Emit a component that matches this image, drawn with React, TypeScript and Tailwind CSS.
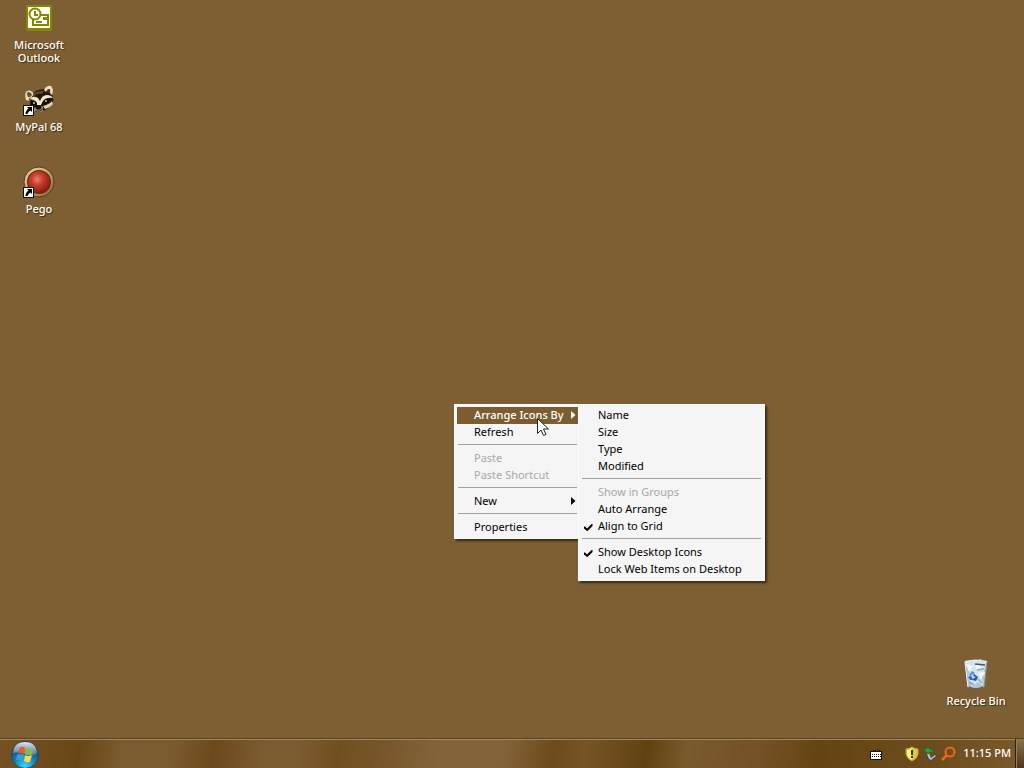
import type { ReactNode } from 'react';

type Entry = { label: string; disabled?: boolean; checked?: boolean; active?: boolean; submenu?: boolean } | null;

const mainMenu: Entry[] = [
  { label: 'Arrange Icons By', active: true, submenu: true },
  { label: 'Refresh' },
  null,
  { label: 'Paste', disabled: true },
  { label: 'Paste Shortcut', disabled: true },
  null,
  { label: 'New', submenu: true },
  null,
  { label: 'Properties' },
];

const arrangeMenu: Entry[] = [
  { label: 'Name' },
  { label: 'Size' },
  { label: 'Type' },
  { label: 'Modified' },
  null,
  { label: 'Show in Groups', disabled: true },
  { label: 'Auto Arrange' },
  { label: 'Align to Grid', checked: true },
  null,
  { label: 'Show Desktop Icons', checked: true },
  { label: 'Lock Web Items on Desktop' },
];

function Menu({ label, entries, className }: { label: string; entries: Entry[]; className: string }) {
  return (
    <div
      role="menu"
      aria-label={label}
      className={`absolute border border-white bg-[#f5f5f5] p-0.5 shadow-[2px_2px_2px_0_rgba(30,18,0,0.7)] ${className}`}
    >
      {entries.map((e, i) =>
        e === null ? (
          <div key={i} role="separator" className="h-[9px] px-px pt-[3px]">
            <div className="h-px bg-[#a0a0a0]" />
          </div>
        ) : (
          <button
            key={i}
            role={e.checked ? 'menuitemcheckbox' : 'menuitem'}
            aria-checked={e.checked ? true : undefined}
            disabled={e.disabled}
            className={`flex h-[17px] w-full items-center pb-0.5 text-left leading-[15px] whitespace-nowrap ${
              e.active ? 'bg-[#7b5d31] font-medium text-white' : e.disabled ? 'text-[#aaa8a5]' : 'text-black'
            }`}
          >
            <span className="flex w-[17px] shrink-0 items-center pt-[3px] pl-[3px]">
              {e.checked && (
                <svg width="9" height="8" viewBox="0 0 9 8" aria-hidden="true">
                  <path d="M0 3.500H1L3 5.500L7.500 1H8.500V3L3.500 8H3L0 5.500Z" fill="#000" />
                </svg>
              )}
            </span>
            <span className="flex-1">{e.label}</span>
            {e.submenu && (
              <svg width="8" height="8" viewBox="0 0 8 8" aria-hidden="true">
                <path d="M1 0 L5.500 4 L1 8 Z" fill="currentColor" />
              </svg>
            )}
          </button>
        ),
      )}
    </div>
  );
}

function DesktopIcon({ label, shortcut, children }: { label: string; shortcut?: boolean; children: ReactNode }) {
  return (
    <button className="flex h-[82px] w-[78px] flex-col items-center gap-1 text-center font-medium text-white [text-shadow:1px_1px_1px_rgba(50,32,5,0.8)]">
      <span className="relative block size-8">
        {children}
        {shortcut && (
          <svg className="absolute bottom-0 left-0" width="11" height="11" viewBox="0 0 11 11" aria-hidden="true">
            <path d="M0 0h11v11H0z" fill="#111" />
            <path d="M1 1h9v9H1z" fill="#fff" />
            <path d="M4 2h5v5L7.500 5.500Q5 6.500 4.500 9H2.500Q2.500 5.500 5.500 3.500Z" fill="#000" />
          </svg>
        )}
      </span>
      <span className="w-[60px] leading-[13px]">{label}</span>
    </button>
  );
}

function OutlookIcon() {
  return (
    <svg width="32" height="32" viewBox="0 0 32 32" aria-hidden="true">
      <path d="M3 3h26v26H3z" fill="#858500" />
      <path d="M5 5h22v21H5z" fill="#fffff0" />
      <path d="M16 13h9v10H10v-6" fill="#fff" stroke="#858500" strokeWidth="2" />
      <circle cx="12" cy="12" r="5.500" fill="#fff" stroke="#858500" strokeWidth="2" />
      <path d="M12 9v4h3" fill="none" stroke="#858500" strokeWidth="2" />
      <path d="M20 15h4v3h-4zM13 19h6v2h-6z" fill="#858500" />
    </svg>
  );
}

function RaccoonIcon() {
  return (
    <svg width="32" height="32" viewBox="0 0 32 32" aria-hidden="true">
      <path d="M8 11Q13 5 22 5L28 9Q32 15 29 21Q23 28 14 27Q8 26 7 20Z" fill="#24170f" />
      <path d="M3 16Q1 9 4 7Q8 5 11 10L8 14Q5 13 6 17Z" fill="#e8d9b8" />
      <path d="M5 13Q3 9 5 8Q8 8 9 11L7 13Z" fill="#6c4d2c" />
      <path d="M21 6Q24 1 28 2Q31 5 29 11L27 9Q28 5 26 5Q24 5 23 8Z" fill="#efdfbf" />
      <path d="M23 8Q24 5 27 5L27 9Z" fill="#4a3020" />
      <path d="M10 10Q15 6 21 7L19 10Q14 9 10 13Z" fill="#5c4430" />
      <path d="M7 15Q10 11 15 14L17 17Q19 11 24 11Q28 11 30 14Q26 13 22 15Q19 18 18 21L14 21Q14 17 10 16Z" fill="#f5e8cb" />
      <path d="M8 17Q13 16 14 20Q12 23 8 22Z" fill="#120d0a" />
      <path d="M20 17Q25 13 27 16Q25 20 19 21Z" fill="#120d0a" />
      <path d="M20 22Q27 20 29 17L30 20Q27 24 22 25Z" fill="#e3cfa8" />
      <circle cx="11" cy="19" r="1" fill="#b8cfd5" />
      <circle cx="23" cy="17" r="1" fill="#b8cfd5" />
      <path d="M11 24Q16 20 20 23L20 27Q15 29 11 27Z" fill="#a69583" />
      <ellipse cx="15.500" cy="23.500" rx="3" ry="2" fill="#15100d" />
      <path d="M12 27Q17 28 20 25" fill="none" stroke="#38241a" />
    </svg>
  );
}

function PegoIcon() {
  return (
    <svg width="32" height="32" viewBox="0 0 32 32" aria-hidden="true">
      <defs>
        <radialGradient id="ball" cx=".42" cy=".38" r=".65">
          <stop offset="0" stopColor="#ef806a" />
          <stop offset=".4" stopColor="#c83e2d" />
          <stop offset="1" stopColor="#861b12" />
        </radialGradient>
        <linearGradient id="rim" x2="1" y2="1">
          <stop stopColor="#ecd6a4" />
          <stop offset=".5" stopColor="#cda66d" />
          <stop offset="1" stopColor="#8d5728" />
        </linearGradient>
      </defs>
      <circle cx="16" cy="16" r="15" fill="url(#rim)" stroke="#5d3919" />
      <circle cx="16" cy="16" r="12" fill="#5c2a18" />
      <circle cx="16" cy="16" r="11" fill="url(#ball)" />
    </svg>
  );
}

function RecycleIcon() {
  return (
    <svg width="32" height="32" viewBox="0 0 32 32" aria-hidden="true">
      <path d="M5 3L8 29Q16 33 24 29L27 3Z" fill="#b4c6d0" stroke="#8a979b" />
      <path d="M5 3Q15 0 27 3L25 8Q15 5 6 8Z" fill="#e4edef" />
      <path d="M6 5L10 2L15 5L20 1L26 4L24 12L25 16L22 19L23 28L18 24L12 29L10 23L8 19L10 14Z" fill="#d4e3eb" />
      <path d="M6 6L13 8L9 14ZM15 5L22 9L16 12ZM18 15L25 14L21 21Z" fill="#f3f7f8" />
      <path d="M15 6L25 7" stroke="#43535b" strokeWidth="1.500" />
      <path d="M17 12L24 11M9 24L14 27M18 21L22 25" stroke="#8ca9bc" strokeWidth="1.500" />
      <path d="M9 17L12 13L15 15L13 17L12 16L11 19Z" fill="#5c92d8" />
      <path d="M14 16L18 19L16 23L12 22L14 20L16 19L13 18Z" fill="#2456b6" />
      <path d="M8 19L10 22L13 22L12 19L10 18Z" fill="#3267c2" />
      <path d="M5 4L8 29" stroke="#f3f8fa" />
      <path d="M9 29Q16 33 23 29" fill="none" stroke="#6c5c50" strokeWidth="2" />
    </svg>
  );
}

function StartOrb() {
  return (
    <svg width="28" height="28" viewBox="0 0 28 28" aria-hidden="true">
      <defs>
        <radialGradient id="orb" cx=".5" cy=".9" r=".9">
          <stop offset="0" stopColor="#36d9f7" />
          <stop offset=".45" stopColor="#127fae" />
          <stop offset="1" stopColor="#143754" />
        </radialGradient>
        <linearGradient id="gloss" x2="0" y2="1">
          <stop stopColor="#e1e7f5" />
          <stop offset="1" stopColor="#7187aa" stopOpacity=".7" />
        </linearGradient>
      </defs>
      <circle cx="14" cy="14" r="13.500" fill="url(#orb)" stroke="#31485a" />
      <path d="M2 12Q3 1 14 1Q25 1 26 12Q20 16 14 13Q8 10 2 12Z" fill="url(#gloss)" />
      <path d="M9 6Q12 5 14 7L13 13Q10 11 7 12Z" fill="#ed5a25" />
      <path d="M15 7Q18 9 22 8L21 13Q18 15 14 13Z" fill="#83bf38" />
      <path d="M6 14Q9 12 13 14L12 20Q9 18 5 19Z" fill="#389ee0" />
      <path d="M14 14Q17 16 21 14L19 21Q16 22 13 20Z" fill="#ffd450" />
    </svg>
  );
}

function Tray() {
  return (
    <div className="flex h-full items-center">
      <button aria-label="Keyboard" className="mr-[22px]">
        <svg width="14" height="14" viewBox="0 0 14 14" aria-hidden="true">
          <path d="M4 3h1v1H4zM6 3h1v1H6zM8 2h1v1H8zM10 3h1v1h-1z" fill="#171008" />
          <path d="M1 4h12v9H1z" fill="#171008" />
          <path d="M2 5h10v7H2z" fill="#fff" />
          <path
            d="M3 7h1v1H3zM5 7h1v1H5zM7 7h1v1H7zM9 7h1v1H9zM3 9h1v1H3zM5 9h1v1H5zM7 9h1v1H7zM9 9h1v1H9zM11 7h1v1h-1zM11 9h1v1h-1z"
            fill="#171008"
          />
        </svg>
      </button>
      <button aria-label="Security alert" className="mr-1">
        <svg width="14" height="16" viewBox="0 0 14 16" aria-hidden="true">
          <path d="M7 1Q10 3 13 3V8Q12 13 7 15Q2 13 1 8V3Q4 3 7 1Z" fill="#dccb35" stroke="#b8a767" />
          <path d="M7 2V14Q3 12 2 8V4Q5 4 7 2Z" fill="#fff274" />
          <path d="M6 4h2v5H6zM6 10h2v2H6z" fill="#342d12" />
        </svg>
      </button>
      <button aria-label="Safely remove hardware" className="mr-1">
        <svg width="14" height="16" viewBox="0 0 14 16" aria-hidden="true">
          <path d="M3 8L6 6L8 11L12 8L14 10L8 15L5 14Z" fill="#404847" />
          <path d="M4 8L6 7L8 12L12 9L13 10L8 14L6 13Z" fill="#b9c0b9" />
          <path d="M1 4L6 1V3Q10 3 10 7Q8 5 6 6V8Z" fill="#28a244" stroke="#176e29" strokeWidth=".5" />
        </svg>
      </button>
      <button aria-label="Search" className="mr-[7px]">
        <svg width="15" height="16" viewBox="0 0 15 16" aria-hidden="true">
          <circle cx="9" cy="6" r="4.500" fill="none" stroke="#ed671d" strokeWidth="2" />
          <path d="M6 9L1 14" stroke="#ed671d" strokeWidth="2.500" />
        </svg>
      </button>
      <time className="mr-1 font-medium text-white">11:15 PM</time>
      <button
        aria-label="Show desktop"
        className="h-full w-[9px] border-l border-[#30200c] bg-linear-to-b from-[#8a714f] to-[#51351a] shadow-[inset_1px_0_0_#947e5d]"
      />
    </div>
  );
}

export default function App() {
  return (
    <div className="relative flex min-h-screen flex-col overflow-hidden bg-[#7d5f33] font-['Noto_Sans',sans-serif] text-[11px] select-none">
      <main className="flex flex-1 justify-between">
        <div className="flex flex-col pt-0.5">
          <DesktopIcon label="Microsoft Outlook">
            <OutlookIcon />
          </DesktopIcon>
          <DesktopIcon label="MyPal 68" shortcut>
            <RaccoonIcon />
          </DesktopIcon>
          <DesktopIcon label="Pego" shortcut>
            <PegoIcon />
          </DesktopIcon>
        </div>
        <div className="-mb-0.5 flex items-end pr-[9px]">
          <DesktopIcon label="Recycle Bin">
            <RecycleIcon />
          </DesktopIcon>
        </div>
      </main>

      <footer className="flex h-[30px] items-center justify-between border-t border-[#5a421f] bg-[linear-gradient(100deg,#755124_0%,#6b4919_6%,#684716_8%,#7a5b2f_12%,#7a5b2e_17%,#6c491b_21%,#7c5c31_26%,#7c5d32_29%,#70501f_33%,#765529_37%,#83643a_43%,#83643a_49%,#6d4a1b_54%,#765426_57%,#604211_63%,#795a2c_67%,#755126_74%,#644412_80%,#694818_85%,#6c4b1c_91%,#765526_97%,#7b5b30_100%)] pl-[11px] shadow-[inset_0_1px_0_#a68b5d]">
        <button aria-label="Start" className="pt-0.5">
          <StartOrb />
        </button>
        <Tray />
      </footer>

      <Menu label="Desktop" entries={mainMenu} className="top-[404px] left-[454px] w-[127px]" />
      <Menu label="Arrange Icons By" entries={arrangeMenu} className="top-[404px] left-[578px] w-[187px]" />
      <svg className="pointer-events-none absolute top-[418px] left-[537px]" width="12" height="19" viewBox="0 0 12 19" aria-hidden="true">
        <path d="M.5.5V15.500L4 12L6.500 17.500L9 16.500L6.500 11H11.500Z" fill="#fff" stroke="#222" />
      </svg>
    </div>
  );
}
